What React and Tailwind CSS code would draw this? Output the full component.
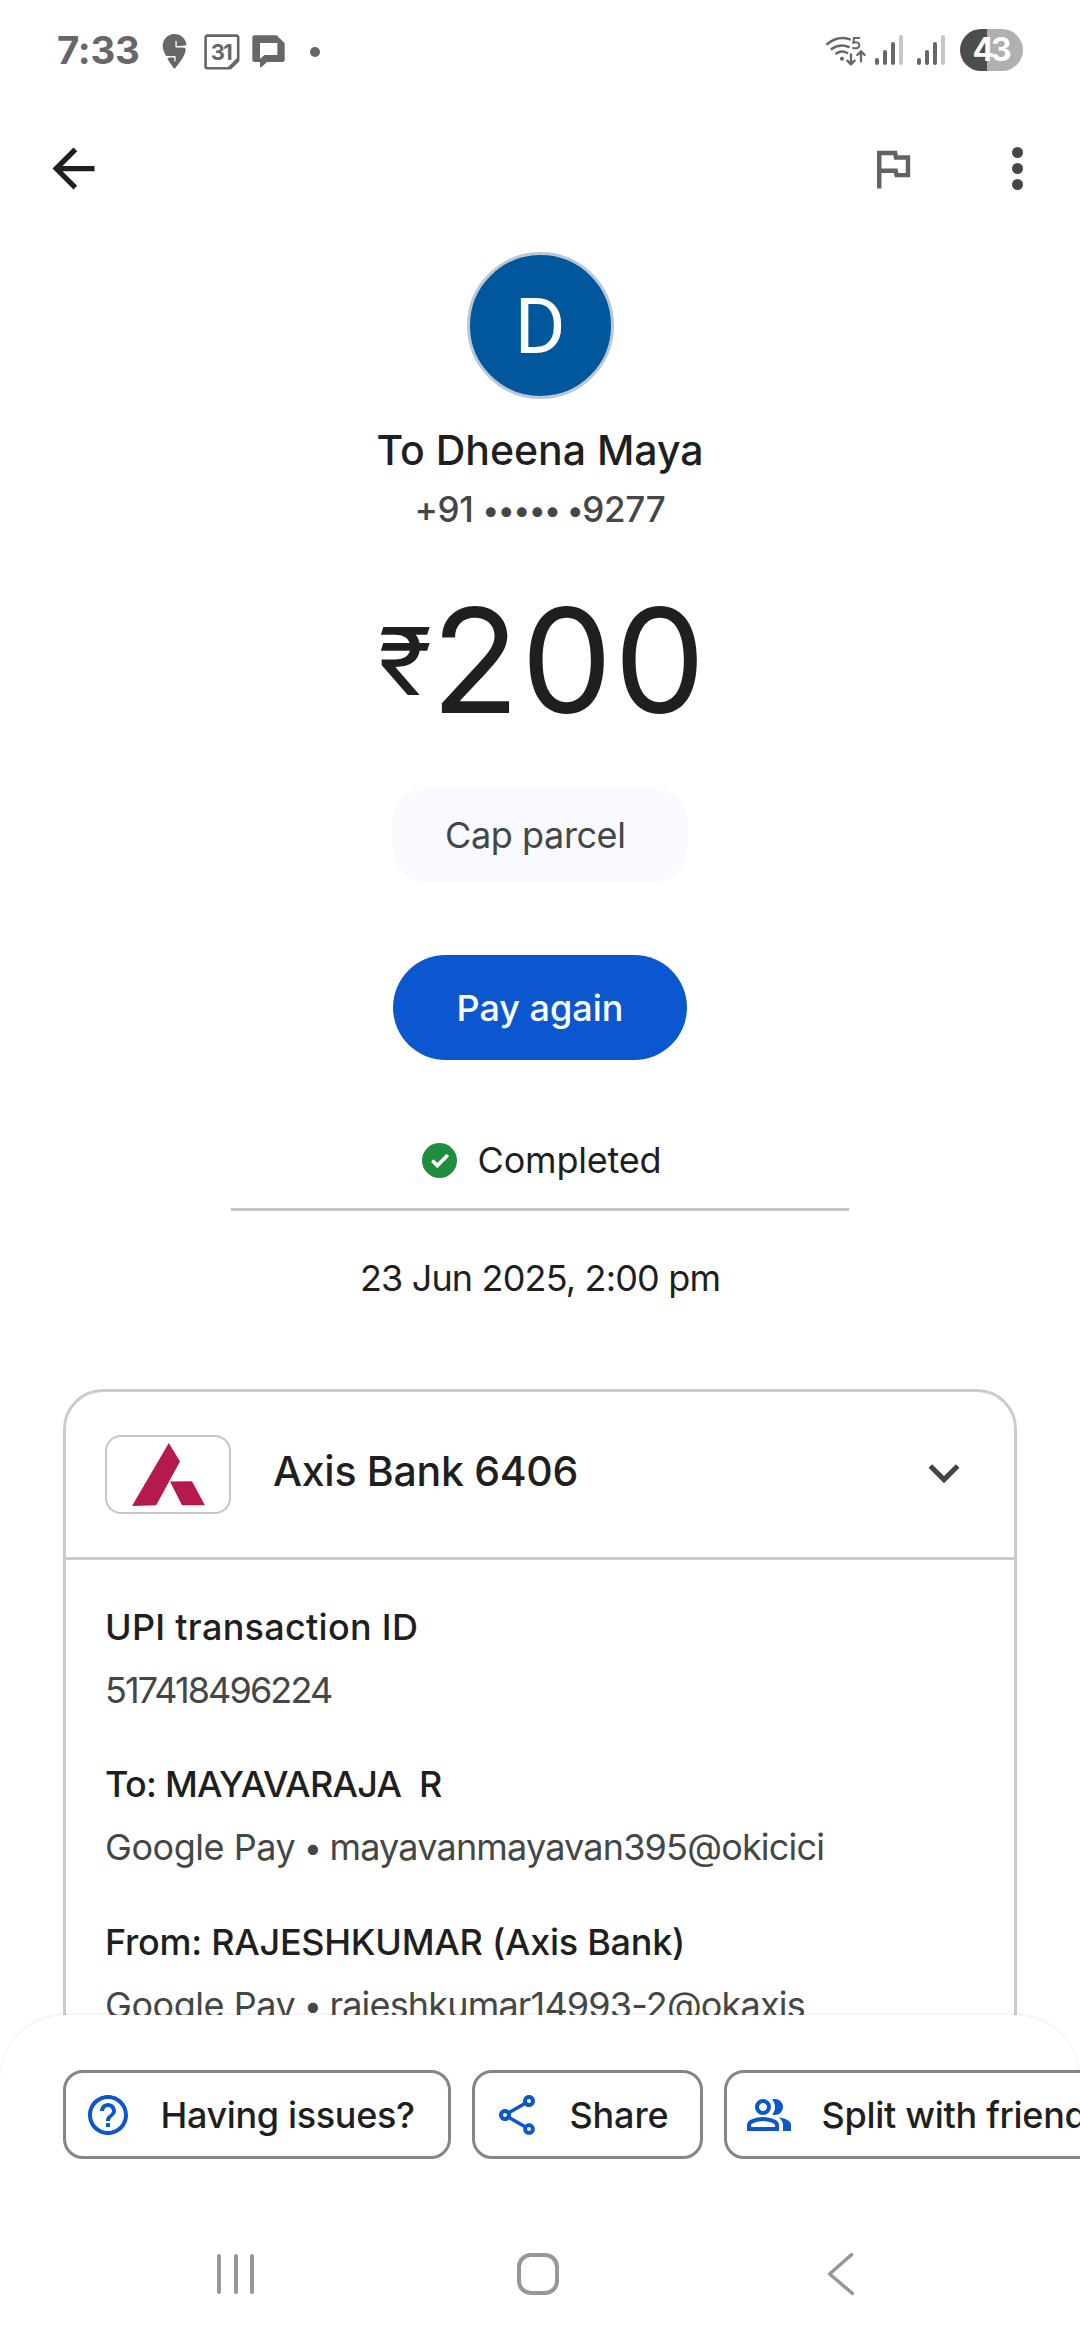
import { MdArrowBack, MdOutlineFlag, MdHelpOutline, MdOutlineShare, MdKeyboardArrowDown } from "react-icons/md";
import { SiSwiggy } from "react-icons/si";

function SignalBars() {
  return (
    <div className="flex h-[30px] items-end gap-1">
      <span className="h-[7px] w-1 rounded-full bg-[#676767]" />
      <span className="h-[15px] w-1 rounded-full bg-[#676767]" />
      <span className="h-[23px] w-1 rounded-full bg-[#676767]" />
      <span className="h-[30px] w-1 rounded-full bg-[#c6c6c6]" />
    </div>
  );
}

function CalendarIcon() {
  return (
    <div className="relative ml-[12px] h-9 w-9">
      <svg viewBox="0 0 36 36" className="h-9 w-9" fill="none" stroke="#676767" strokeWidth="2.6" strokeLinejoin="round">
        <path d="M3.2 1.6h29.4a1.6 1.6 0 0 1 1.6 1.6v22.4l-8.6 8.6H3.2a1.6 1.6 0 0 1-1.6-1.6V3.2a1.6 1.6 0 0 1 1.6-1.6z" />
        <path d="M34.2 25.6l-8.6 8.6" strokeWidth="4" />
      </svg>
      <span className="absolute inset-0 flex items-center justify-center pr-[2px] text-[22px] leading-none font-bold tracking-[-1.5px] text-[#676767]">31</span>
    </div>
  );
}

function ChatIcon() {
  return (
    <svg viewBox="756 105 99 99" className="ml-3 h-[33px] w-[33px]" fill="#676767" fillRule="evenodd">
      <path d="M763 106h67l24 24v50q0 6-6 6h-47l-16 15q-5 3-5-2v-13h-17q-6 0-6-6v-68q0-6 6-6zM780 129v48l13-12h39v-36z" />
    </svg>
  );
}

function WifiIcon() {
  return (
    <svg viewBox="135 105 125 99" className="h-[33px] w-[41.67px]" fill="none" stroke="#676767" strokeWidth="7.5" strokeLinecap="round">
      <path d="M142 135Q174 109 209 121" />
      <path d="M155 150Q180 133 206 144" />
      <path d="M169 163Q186 153 202 162" />
      <circle cx="186" cy="179" r="6" fill="#676767" stroke="none" />
      <path d="M238 117H222L220 131Q238 127 238 139Q237 151 219 147" strokeWidth="6" />
      <path d="M213 166V195M202 185L213 196L224 185M243 187V158M232 168L243 157L254 168" strokeWidth="7" />
    </svg>
  );
}

function StatusBar() {
  return (
    <div className="flex h-[100px] shrink-0 items-center pr-[57px] pl-[57px]">
      <span className="w-[100px] text-[38.5px] leading-none font-bold tracking-[-0.27px] text-[#676767]">7:33</span>
      <div className="flex items-center pt-[3px]">
        <SiSwiggy className="size-[35px] text-[#676767]" />
        <CalendarIcon />
        <ChatIcon />
        <span className="ml-[25px] size-[10px] rounded-full bg-[#676767]" />
      </div>
      <div className="ml-auto flex items-center">
        <WifiIcon />
        <span className="w-2" />
        <SignalBars />
        <span className="w-[14px]" />
        <SignalBars />
        <div className="ml-[15px] flex h-[42px] w-[63px] items-center justify-center rounded-full bg-[linear-gradient(90deg,#4d4d4d_27px,#b0b0b0_27px)] text-[32px] leading-none font-bold tracking-[-3.2px] text-white">
          <span className="mr-0.5">43</span>
        </div>
      </div>
    </div>
  );
}

function AppBar() {
  return (
    <div className="flex h-[137px] shrink-0 items-center pr-[57px] pl-[41.5px]">
      <MdArrowBack className="size-[63px] text-[#1f1f1f]" />
      <MdOutlineFlag className="ml-auto size-[53px] text-[#5f6368]" />
      <div className="ml-[93px] flex flex-col gap-[5.2px]">
        <span className="size-[10.6px] rounded-full bg-[#444746]" />
        <span className="size-[10.6px] rounded-full bg-[#444746]" />
        <span className="size-[10.6px] rounded-full bg-[#444746]" />
      </div>
    </div>
  );
}

function Summary() {
  return (
    <section className="flex flex-col items-center text-[36px] leading-[50px] text-[#1f1f1f]">
      <div className="mt-[15px] flex size-[147px] items-center justify-center rounded-full border-[3px] border-[#b9c8d4] bg-[#00579c] pt-[2px] font-[Roboto] text-[78px] leading-none text-white">
        D
      </div>
      <h1 className="mt-[23px] text-[41px] leading-[56px] font-medium">To Dheena Maya</h1>
      <p className="mt-[6px] text-[35px] font-medium tracking-[-0.3px] text-[#444746]">
        +91 <span className="align-[1.5px] text-[31px] leading-0 tracking-[-1.1px]">••••• •</span>9277
      </p>
      <div className="mt-[52px] flex h-[150px] items-center pl-[5px]">
        <span className="w-[53px] origin-left scale-x-108 text-[93px] leading-[150px]">₹</span>
        <span className="text-[145px] leading-[150px] tracking-[1.5px]">200</span>
      </div>
      <div className="mt-[52px] flex h-[94px] w-[294px] items-center rounded-[32px] bg-[#f8faff] pl-[52px] tracking-[-0.4px] text-[#444746]">
        Cap parcel
      </div>
      <button className="mt-[73px] h-[105px] w-[294px] rounded-full bg-[#0b57d0] font-medium text-white">Pay again</button>
      <div className="mt-[75px] flex items-center gap-[21px] pl-[3px] tracking-[-0.2px]">
        <svg viewBox="0 0 35 35" className="size-[35px]">
          <circle cx="17.5" cy="17.5" r="17.5" fill="#1e8e3e" />
          <path d="M10.3 17.6l5 5 10.5-10.5" fill="none" stroke="#fff" strokeWidth="3.6" />
        </svg>
        Completed
      </div>
      <div className="mt-[23px] h-[2.5px] w-[618px] bg-[#c6c6c6]" />
      <p className="mt-[42.5px] tracking-[-0.84px]">23 Jun 2025, 2:00 pm</p>
    </section>
  );
}

function Detail({ label, value, handle, labelClass, valueClass }) {
  return (
    <div className="flex flex-col gap-[15px] text-[36px] leading-[48px] whitespace-pre">
      <span className={"font-medium text-[#1f1f1f] " + labelClass}>{label}</span>
      <span className={"text-[#444746] " + valueClass}>
        {handle ? (
          <>
            <span className="tracking-[-0.45px]">{value}</span>
            <span className="align-[1.5px] text-[32.5px] leading-0"> • </span>
            {handle}
          </>
        ) : (
          value
        )}
      </span>
    </div>
  );
}

function BankCard() {
  return (
    <section className="mx-[63px] mt-[85.5px] h-[760px] rounded-t-[40px] border-[3px] border-[#cbcbcb]">
      <div className="flex h-[168px] items-center border-b-[3px] border-[#cbcbcb] pr-[39px] pl-[39px]">
        <div className="flex h-[79px] w-[126px] items-center justify-center rounded-2xl border-2 border-[#c6c6c6]">
          <svg viewBox="0 0 73 63" className="h-[63px] w-[73px]" fill="#b6194d">
            <path d="M36.8 0L48 18.5L24.2 62.3L0 63z" />
            <path d="M38 38.5L60 38.2L73 62.3H50z" />
          </svg>
        </div>
        <h2 className="ml-[42px] pb-[6px] text-[41px] leading-[56px] font-medium tracking-[-0.28px] text-[#1f1f1f]">Axis Bank 6406</h2>
        <MdKeyboardArrowDown className="mb-[3px] ml-auto size-[62px] text-[#444746]" />
      </div>
      <div className="flex flex-col gap-[46.7px] pt-[43px] pl-[39px]">
        <Detail label="UPI transaction ID" value="517418496224" labelClass="tracking-[0.29px]" valueClass="tracking-[-1.87px]" />
        <Detail label={"To: MAYAVARAJA  R"} value="Google Pay" handle="mayavanmayavan395@okicici" labelClass="tracking-[-0.75px]" valueClass="tracking-[-0.81px]" />
        <Detail label="From: RAJESHKUMAR (Axis Bank)" value="Google Pay" handle="rajeshkumar14993-2@okaxis" labelClass="tracking-[-0.27px]" valueClass="tracking-[-0.82px]" />
      </div>
    </section>
  );
}

function GroupIcon() {
  return (
    <svg viewBox="0 -960 960 960" className="size-12 shrink-0 text-[#0b57d0]" fill="currentColor">
      <path d="M40-160v-112q0-34 17.5-62.5T104-378q62-31 126-46.5T360-440q66 0 130 15.5T616-378q29 15 46.5 43.5T680-272v112H40Zm720 0v-120q0-44-24.5-84.5T666-434q51 6 96 20.5t84 35.5q36 20 55 44.5t19 53.5v120H760ZM360-480q-66 0-113-47t-47-113q0-66 47-113t113-47q66 0 113 47t47 113q0 66-47 113t-113 47Zm400-160q0 66-47 113t-113 47q-11 0-28-2.5t-28-5.5q27-32 41.5-71t14.5-81q0-42-14.5-81T544-792q14-5 28-6.5t28-1.5q66 0 113 47t47 113ZM120-240h480v-32q0-11-5.5-20T580-306q-54-27-109-40.5T360-360q-56 0-111 13.5T140-306q-9 5-14.5 14t-5.5 20v32Zm240-320q33 0 56.5-23.5T440-640q0-33-23.5-56.5T360-720q-33 0-56.5 23.5T280-640q0 33 23.5 56.5T360-560Z" />
    </svg>
  );
}

function ActionChip({ icon, children, className }) {
  return (
    <button className={"flex h-[89px] shrink-0 items-center gap-[29px] rounded-[20px] border-[3px] border-[#848786] pl-[17.5px] text-[36px] font-medium whitespace-nowrap text-[#1f1f1f] " + className}>
      {icon}
      {children}
    </button>
  );
}

function ActionSheet() {
  return (
    <div className="h-[192px] shrink-0 rounded-t-[66px] bg-white pt-[55px] shadow-[0_-1px_3px_rgba(0,0,0,0.08)]">
      <div className="flex gap-[21px] overflow-hidden pl-[63px]">
        <ActionChip className="w-[388px] tracking-[-0.35px]" icon={<MdHelpOutline className="size-12 text-[#0b57d0]" />}>Having issues?</ActionChip>
        <ActionChip className="w-[231px] tracking-[-0.15px]" icon={<MdOutlineShare className="size-12 text-[#0b57d0]" />}>Share</ActionChip>
        <ActionChip className="w-[430px] tracking-[-0.3px]" icon={<GroupIcon />}>Split with friends</ActionChip>
      </div>
    </div>
  );
}

function NavBar() {
  return (
    <div className="flex h-[133px] shrink-0 items-center bg-white pt-px pl-[217px]">
      <div className="flex gap-[12.5px]">
        <span className="h-10 w-1 rounded-full bg-[#979797]" />
        <span className="h-10 w-1 rounded-full bg-[#979797]" />
        <span className="h-10 w-1 rounded-full bg-[#979797]" />
      </div>
      <div className="ml-[263px] h-[42px] w-[42px] rounded-[14px] border-4 border-[#979797]" />
      <svg viewBox="0 0 28 44" className="ml-[268px] h-11 w-7" fill="none" stroke="#979797" strokeWidth="3.4" strokeLinecap="round" strokeLinejoin="round">
        <path d="M24.6 2.6L2.6 22L25.4 41.4" />
      </svg>
    </div>
  );
}

export default function App() {
  return (
    <div className="flex h-[2340px] w-[1080px] flex-col overflow-hidden bg-white font-[Inter,Roboto,sans-serif]">
      <StatusBar />
      <AppBar />
      <main className="min-h-0 flex-1 overflow-hidden">
        <Summary />
        <BankCard />
      </main>
      <ActionSheet />
      <NavBar />
    </div>
  );
}
